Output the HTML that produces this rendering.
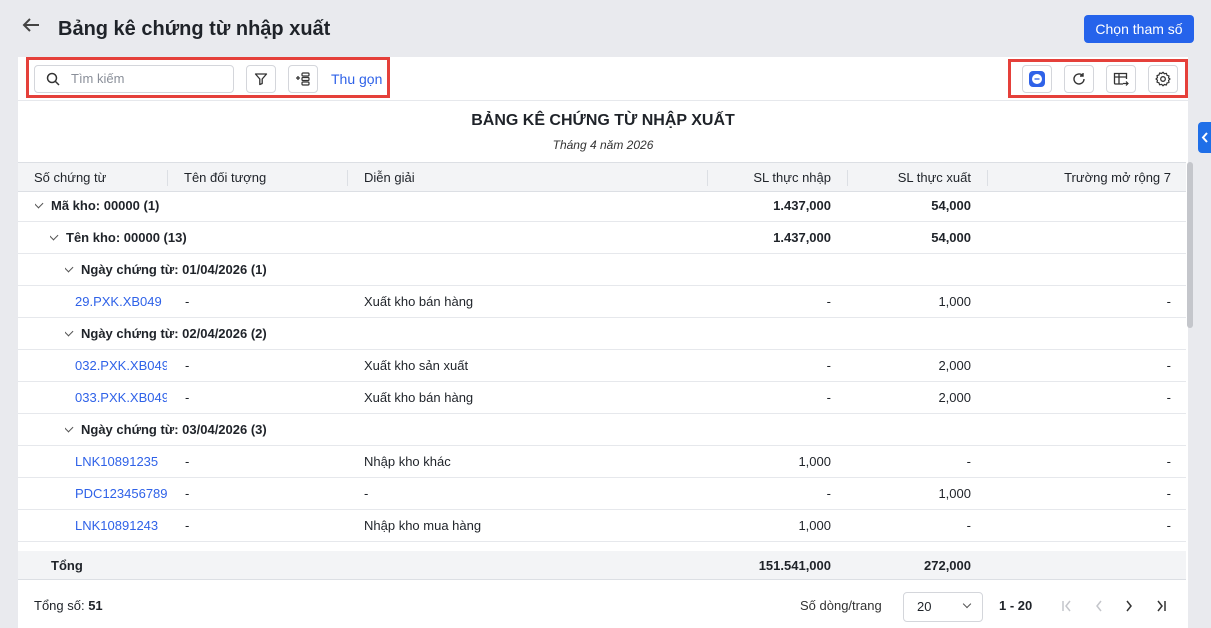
<!DOCTYPE html>
<html><head><meta charset="utf-8"><style>
*{box-sizing:border-box;margin:0;padding:0}
body{width:1211px;height:628px;overflow:hidden;background:#e9eaee;font-family:"Liberation Sans",Arial,sans-serif;font-size:13px;color:#1f2329;position:relative}
.a{position:absolute}
.panel{left:18px;top:57px;width:1170px;height:571px;background:#fff}
.btn{position:absolute;width:30px;height:28px;border:1px solid #d4d6db;border-radius:4px;background:#fff;display:flex;align-items:center;justify-content:center}
.red{position:absolute;border:3px solid #e5403a}
.row{position:absolute;left:18px;width:1168px;height:32px;border-bottom:1px solid #e6e8ec}
.c{position:absolute;top:0;line-height:32px;white-space:nowrap;overflow:hidden}
.r{text-align:right}
.b{font-weight:bold}
.l{color:#2f62e8}
.chev{display:inline-block;width:7px;height:7px;border-right:1.5px solid #555;border-bottom:1.5px solid #555;transform:rotate(45deg);margin-right:9px;position:relative;top:-3px}
</style></head><body>
<svg class="a" style="left:22px;top:17px" width="18" height="16" viewBox="0 0 18 16"><path d="M17 8H2M8 2L2 8l6 6" fill="none" stroke="#444" stroke-width="2"/></svg>
<div class="a" style="left:58px;top:18px;font-size:20px;font-weight:bold;color:#1f2329">Bảng kê chứng từ nhập xuất</div>
<div class="a" style="left:1084px;top:15px;width:110px;height:28px;background:#2563eb;border-radius:4px;color:#fff;font-size:14px;line-height:28px;text-align:center">Chọn tham số</div>
<div class="a panel"></div>
<div class="a" style="left:18px;top:100px;width:1170px;height:1px;background:#e6e8ec"></div>
<div class="red" style="left:26px;top:57px;width:364px;height:41px"></div>
<div class="a" style="left:34px;top:65px;width:200px;height:28px;border:1px solid #d4d6db;border-radius:4px"></div>
<svg class="a" style="left:46px;top:72px" width="14" height="14" viewBox="0 0 14 14"><circle cx="6" cy="6" r="4.5" fill="none" stroke="#333" stroke-width="1.5"/><path d="M9.5 9.5L13 13" stroke="#333" stroke-width="1.5"/></svg>
<div class="a" style="left:71px;top:71px;color:#8a8f99;font-size:13px">Tìm kiếm</div>
<div class="btn" style="left:246px;top:65px"><svg width="14" height="14" viewBox="0 0 14 14"><path d="M1.5 2h11l-4.3 5v4.5l-2.4 1V7z" fill="none" stroke="#333" stroke-width="1.3" stroke-linejoin="round"/></svg></div>
<div class="btn" style="left:288px;top:65px"><svg width="16" height="14" viewBox="0 0 16 14"><path d="M1 6h4M3 4v4" stroke="#333" stroke-width="1.3"/><rect x="7" y="1" width="7" height="3" rx="1" fill="none" stroke="#333" stroke-width="1.2"/><rect x="7" y="5.5" width="7" height="3" rx="1" fill="none" stroke="#333" stroke-width="1.2"/><rect x="7" y="10" width="7" height="3" rx="1" fill="none" stroke="#333" stroke-width="1.2"/></svg></div>
<div class="a" style="left:331px;top:71px;color:#2f62e8;font-size:14px">Thu gọn</div>
<div class="red" style="left:1008px;top:59px;width:180px;height:39px"></div>
<div class="btn" style="left:1022px;top:65px"><svg width="16" height="16" viewBox="0 0 16 16"><rect x="0" y="0" width="16" height="16" rx="4" fill="#2f62e8"/><circle cx="8" cy="8" r="5" fill="#fff"/><path d="M5.5 8h5" stroke="#2f62e8" stroke-width="1.3"/></svg></div>
<div class="btn" style="left:1064px;top:65px"><svg width="14" height="14" viewBox="0 0 14 14"><path d="M12 7a5 5 0 1 1-1.5-3.6M11 1v3H8" fill="none" stroke="#333" stroke-width="1.4"/></svg></div>
<div class="btn" style="left:1106px;top:65px"><svg width="16" height="16" viewBox="0 0 16 16"><path d="M10 13H2.5a1 1 0 0 1-1-1V2.5h12V8M1.5 6h12M6 2.5V13" fill="none" stroke="#333" stroke-width="1.3"/><path d="M10 12.5h5M13 10.5l2 2-2 2" fill="none" stroke="#333" stroke-width="1.2"/></svg></div>
<div class="btn" style="left:1148px;top:65px"><svg width="16" height="16" viewBox="0 0 16 16"><circle cx="8" cy="8" r="2.3" fill="none" stroke="#333" stroke-width="1.3"/><path d="M8 1.2l1.4 1.6 2-.5.6 2 2 .6-.5 2L15 8l-1.5 1.4.5 2-2 .6-.6 2-2-.5L8 14.8l-1.4-1.5-2 .5-.6-2-2-.6.5-2L1 8l1.5-1.4-.5-2 2-.6.6-2 2 .5z" fill="none" stroke="#333" stroke-width="1.2" stroke-linejoin="round"/></svg></div>
<div class="a" style="left:1198px;top:122px;width:13px;height:31px;background:#1f6fe8;border-radius:4px 0 0 4px"><svg width="13" height="31"><path d="M9 11l-4 4.5 4 4.5" fill="none" stroke="#fff" stroke-width="2"/></svg></div>
<div class="a" style="left:18px;top:112px;width:1170px;text-align:center;font-size:16px;font-weight:bold">BẢNG KÊ CHỨNG TỪ NHẬP XUẤT</div>
<div class="a" style="left:18px;top:138px;width:1170px;text-align:center;font-size:12px;font-style:italic;color:#333">Tháng 4 năm 2026</div>
<div class="a" style="left:18px;top:162px;width:1168px;height:30px;background:#f3f4f6;border-top:1px solid #dcdfe4;border-bottom:1px solid #dcdfe4"></div>
<div class="a" style="left:1187px;top:162px;width:6px;height:166px;background:#c4c6cb;border-radius:3px"></div>
<div class="a" style="left:18px;top:163px;width:1168px;height:30px;line-height:30px">
<span class="a" style="left:16px">Số chứng từ</span>
<span class="a" style="left:149px;top:7px;width:1px;height:16px;background:#dcdfe4"></span>
<span class="a" style="left:166px">Tên đối tượng</span>
<span class="a" style="left:329px;top:7px;width:1px;height:16px;background:#dcdfe4"></span>
<span class="a" style="left:346px">Diễn giải</span>
<span class="a" style="left:689px;top:7px;width:1px;height:16px;background:#dcdfe4"></span>
<span class="a" style="right:355px">SL thực nhập</span>
<span class="a" style="left:829px;top:7px;width:1px;height:16px;background:#dcdfe4"></span>
<span class="a" style="right:215px">SL thực xuất</span>
<span class="a" style="left:969px;top:7px;width:1px;height:16px;background:#dcdfe4"></span>
<span class="a" style="right:15px">Trường mở rộng 7</span>
</div>
<div class="row" style="top:190px"><div class="c b" style="left:17px;font-size:13px"><i class="chev"></i>Mã kho: 00000 (1)</div><div class="c b r" style="right:355px">1.437,000</div><div class="c b r" style="right:215px">54,000</div></div>
<div class="row" style="top:222px"><div class="c b" style="left:32px"><i class="chev"></i>Tên kho: 00000 (13)</div><div class="c b r" style="right:355px">1.437,000</div><div class="c b r" style="right:215px">54,000</div></div>
<div class="row" style="top:254px"><div class="c b" style="left:47px"><i class="chev"></i>Ngày chứng từ: 01/04/2026 (1)</div></div>
<div class="row" style="top:286px"><div class="c l" style="left:57px;width:92px">29.PXK.XB049</div><div class="c" style="left:167px">-</div><div class="c" style="left:346px">Xuất kho bán hàng</div><div class="c r" style="right:355px">-</div><div class="c r" style="right:215px">1,000</div><div class="c r" style="right:15px">-</div></div>
<div class="row" style="top:318px"><div class="c b" style="left:47px"><i class="chev"></i>Ngày chứng từ: 02/04/2026 (2)</div></div>
<div class="row" style="top:350px"><div class="c l" style="left:57px;width:92px">032.PXK.XB049</div><div class="c" style="left:167px">-</div><div class="c" style="left:346px">Xuất kho sản xuất</div><div class="c r" style="right:355px">-</div><div class="c r" style="right:215px">2,000</div><div class="c r" style="right:15px">-</div></div>
<div class="row" style="top:382px"><div class="c l" style="left:57px;width:92px">033.PXK.XB049</div><div class="c" style="left:167px">-</div><div class="c" style="left:346px">Xuất kho bán hàng</div><div class="c r" style="right:355px">-</div><div class="c r" style="right:215px">2,000</div><div class="c r" style="right:15px">-</div></div>
<div class="row" style="top:414px"><div class="c b" style="left:47px"><i class="chev"></i>Ngày chứng từ: 03/04/2026 (3)</div></div>
<div class="row" style="top:446px"><div class="c l" style="left:57px;width:92px">LNK10891235</div><div class="c" style="left:167px">-</div><div class="c" style="left:346px">Nhập kho khác</div><div class="c r" style="right:355px">1,000</div><div class="c r" style="right:215px">-</div><div class="c r" style="right:15px">-</div></div>
<div class="row" style="top:478px"><div class="c l" style="left:57px;width:92px">PDC123456789</div><div class="c" style="left:167px">-</div><div class="c" style="left:346px">-</div><div class="c r" style="right:355px">-</div><div class="c r" style="right:215px">1,000</div><div class="c r" style="right:15px">-</div></div>
<div class="row" style="top:510px"><div class="c l" style="left:57px;width:92px">LNK10891243</div><div class="c" style="left:167px">-</div><div class="c" style="left:346px">Nhập kho mua hàng</div><div class="c r" style="right:355px">1,000</div><div class="c r" style="right:215px">-</div><div class="c r" style="right:15px">-</div></div>
<div class="a" style="left:18px;top:551px;width:1168px;height:29px;background:#f3f4f6;border-bottom:1px solid #dcdfe4;line-height:29px">
<span class="a b" style="left:33px">Tổng</span><span class="a b" style="right:355px">151.541,000</span><span class="a b" style="right:215px">272,000</span></div>
<div class="a" style="left:34px;top:598px">Tổng số: <b>51</b></div>
<div class="a" style="left:800px;top:598px;color:#333">Số dòng/trang</div>
<div class="a" style="left:903px;top:592px;width:80px;height:30px;border:1px solid #d4d6db;border-radius:4px;line-height:28px;padding-left:13px">20<span class="a" style="right:12px;top:8px;width:6px;height:6px;border-right:1.3px solid #555;border-bottom:1.3px solid #555;transform:rotate(45deg)"></span></div>
<div class="a b" style="left:999px;top:598px">1 - 20</div>
<svg class="a" style="left:1060px;top:599px" width="14" height="14"><path d="M3 2v10M10 2L6 7l4 5" fill="none" stroke="#c4c6cb" stroke-width="1.5"/></svg>
<svg class="a" style="left:1092px;top:599px" width="14" height="14"><path d="M9 2L5 7l4 5" fill="none" stroke="#c4c6cb" stroke-width="1.5"/></svg>
<svg class="a" style="left:1122px;top:599px" width="14" height="14"><path d="M5 2l4 5-4 5" fill="none" stroke="#333" stroke-width="1.5"/></svg>
<svg class="a" style="left:1154px;top:599px" width="14" height="14"><path d="M4 2l4 5-4 5M11 2v10" fill="none" stroke="#333" stroke-width="1.5"/></svg>
</body></html>
